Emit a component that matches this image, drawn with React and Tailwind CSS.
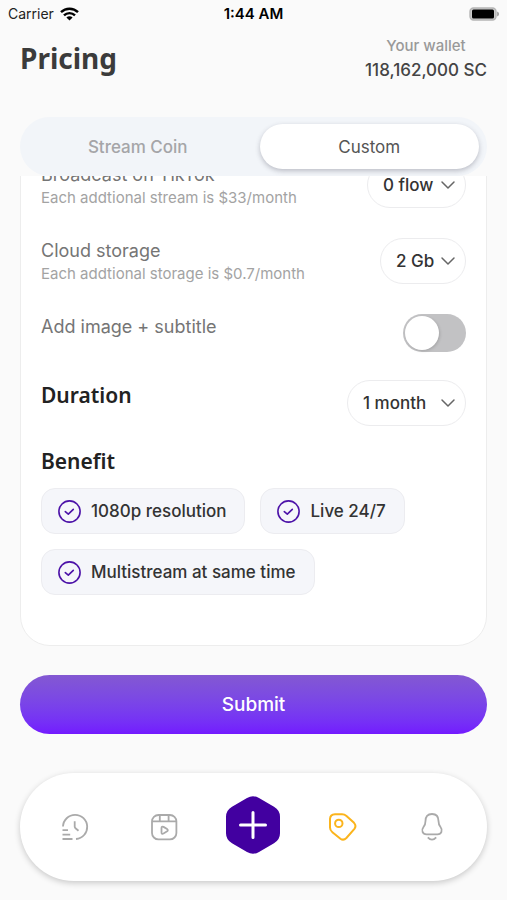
import React, { useState } from "react";
import { ChevronDown } from "lucide-react";

const tabs = ["Stream Coin", "Custom"];

const benefits = ["1080p resolution", "Live 24/7", "Multistream at same time"];

const StatusBar = () => (
  <div className="relative flex h-7 items-center justify-between px-2 text-sm text-[#222]">
    <div className="flex items-center gap-1.5 font-[Inter,sans-serif]">
      <span>Carrier</span>
      <svg width="19" height="14" viewBox="0 0 19 14" fill="none" stroke="#000" strokeWidth="2.4">
        <path d="M1 5.2a12.2 12.2 0 0 1 17 0" />
        <path d="M4 8.4a7.8 7.8 0 0 1 11 0" />
        <path d="M9.5 13.6 6.4 10.5a4.4 4.4 0 0 1 6.2 0Z" fill="#000" stroke="none" />
      </svg>
    </div>
    <span className="absolute inset-x-0 text-center font-[Inter,sans-serif] text-[15px] font-semibold text-black">
      1:44 AM
    </span>
    <svg width="31" height="15" viewBox="0 0 31 15">
      <rect x="2" y="1" width="26" height="12" rx="3.5" fill="#ccc" stroke="#b5b5b5" strokeWidth="1.4" />
      <rect x="4" y="2.5" width="22" height="9" rx="1.5" fill="#000" />
      <path d="M29.2 4.5v5q1.8-.8 1.8-2.5t-1.8-2.5Z" fill="#999" />
    </svg>
  </div>
);

const PillSelect = ({ id, label, options, className }) => (
  <div className={`relative shrink-0 ${className}`}>
    <select
      id={id}
      aria-label={label}
      className="h-[46px] w-full appearance-none rounded-full border border-[#ececee] bg-white pl-[15px] pr-7 pt-0.5 text-[17px] font-medium text-[#333]"
    >
      {options.map((option) => (
        <option key={option}>{option}</option>
      ))}
    </select>
    <ChevronDown
      size={24}
      strokeWidth={1.5}
      className="pointer-events-none absolute right-[6px] top-[11px] text-[#666]"
    />
  </div>
);

const OptionRow = ({ title, note, children }) => (
  <div className="flex items-start justify-between">
    <div>
      <p className="text-lg leading-[26px] text-[#757575]">{title}</p>
      <p className="text-[15px] leading-5 text-[#a3a3a3]">{note}</p>
    </div>
    {children}
  </div>
);

const Benefit = ({ text }) => (
  <li className="flex h-[46px] items-center gap-2.5 rounded-[14px] border border-[#ececf0] bg-[#f5f6fa] pl-4 pr-[18px] text-[17px] font-medium text-[#333]">
    <svg width="23" height="23" viewBox="0 0 23 23" fill="none" stroke="#4c12a8" strokeWidth="1.6">
      <circle cx="11.5" cy="11.5" r="10.6" />
      <path d="m7.3 11.6 3 2.6 5-4.8" strokeLinecap="round" strokeLinejoin="round" />
    </svg>
    <span className="pt-0.5">{text}</span>
  </li>
);

const NavBar = () => (
  <nav className="grid h-[108px] grid-cols-5 items-center justify-items-center rounded-[54px] bg-white px-[10px] text-[#aaa] shadow-[0_2px_6px_rgba(0,0,0,0.2)]">
    <button aria-label="History">
      <svg width="28" height="28" viewBox="-1 -1 28 28" fill="none" stroke="currentColor" strokeWidth="1.8">
        <path d="M1 12.5A12.1 12.1 0 1 1 14 25" />
        <path d="M.5 16.2H6M.5 20.6h7.7M.5 25h10" />
        <path d="M12.7 7.3v5.2q0 1 .8 1.7l3 2.6" />
      </svg>
    </button>
    <button aria-label="Videos">
      <svg width="28" height="28" viewBox="-1 -1 28 28" fill="none" stroke="currentColor" strokeWidth="1.8">
        <rect x="1" y="1" width="24.4" height="24.4" rx="6.5" />
        <path d="M1 7.3h24.4M8.8 1v6.3M17.6 1v6.3" />
        <path d="M10.5 14.2v4q0 2.3 2 1.3l3.6-2.2q1.4-1.1 0-2.2l-3.6-2.2q-2-1-2 1.3Z" />
      </svg>
    </button>
    <button aria-label="Create">
      <svg width="54" height="58" viewBox="0 0 54 58" className="-mt-1">
        <path
          d="M21 2q6-3.5 12 0l15 8.7q6 3.5 6 10v16.6q0 6.5-6 10L33 56q-6 3.5-12 0L6 47.3q-6-3.5-6-10V20.7q0-6.5 6-10Z"
          fill="#4200a0"
        />
        <path d="M27 16.500v25M14.500 29h25" stroke="#fff" strokeWidth="3" strokeLinecap="round" />
      </svg>
    </button>
    <button aria-label="Pricing" className="text-[#fbb41c]">
      <svg width="30" height="30" viewBox="-1 -1 30 30" fill="none" stroke="currentColor" strokeWidth="2">
        <path d="M6 1.2H13q2.500 0 4.500 1.700l7.500 6.900q2.700 3 .4 6l-8 9.200q-2.900 2.900-6 .7l-8-6.500Q.8 17 1 14V6q.2-4.500 5-4.800Z" />
        <circle cx="9.8" cy="10.4" r="3.7" />
      </svg>
    </button>
    <button aria-label="Notifications">
      <svg width="24" height="28" viewBox="-1 0 24 28" fill="none" stroke="currentColor" strokeWidth="1.8">
        <path d="M4.500 8C4.500 3.500 6.500 1 11 1s6.500 2.500 6.500 7c0 3.200.4 4 2 6 2.500 3.200 1 7.300-3 7.300h-11c-4 0-5.500-4.100-3-7.300 1.600-2 2-2.800 2-6Z" />
        <path d="M6.800 24.300q4.200 4.600 8.400 0" />
      </svg>
    </button>
  </nav>
);

const App = () => {
  const [activeTab, setActiveTab] = useState("Custom");

  return (
    <div className="flex h-screen flex-col bg-[#fafafa] font-[Inter,sans-serif] text-base">
      <StatusBar />

      <div className="flex min-h-0 flex-1 flex-col px-5 pb-[19px]">
        <header className="flex h-[89px] items-start justify-between pt-2">
          <h1 className="pt-0.5 font-['Noto_Sans',sans-serif] text-[28px] font-bold leading-10 text-[#3b3b3b]">
            Pricing
          </h1>
          <div className="text-center">
            <p className="text-[15px] font-medium leading-5 text-[#999]">Your wallet</p>
            <p className="pt-0.5 text-[17px] font-medium leading-6 text-[#444]">118,162,000 SC</p>
          </div>
        </header>

        <div
          role="tablist"
          className="grid shrink-0 grid-cols-2 rounded-full bg-[#f2f5f9] px-0.5 py-[7px] text-[17px]"
        >
          {tabs.map((tab) => (
            <button
              key={tab}
              role="tab"
              aria-selected={activeTab === tab}
              onClick={() => setActiveTab(tab)}
              className={`mx-1.5 h-[45px] rounded-full pt-0.5 ${
                activeTab === tab
                  ? "bg-white text-[#555] shadow-[0_2px_5px_rgba(60,60,80,0.3)]"
                  : "font-medium text-[#a5a5a8]"
              }`}
            >
              {tab}
            </button>
          ))}
        </div>

        {/* reversed column keeps the list scrolled to its end on load */}
        <div className="flex min-h-0 flex-1 flex-col-reverse overflow-y-auto [scrollbar-width:none]">
          <div className="rounded-[30px] border border-[#ededed] bg-white px-5 pb-[50px] pt-8">
            <div className="flex flex-col gap-[30px]">
              <OptionRow title="Broadcast on TikTok" note="Each addtional stream is $33/month">
                <PillSelect id="tiktok" label="Broadcast on TikTok" options={["0 flow", "1 flow"]} className="w-[99px]" />
              </OptionRow>
              <OptionRow title="Cloud storage" note="Each addtional storage is $0.7/month">
                <PillSelect id="storage" label="Cloud storage" options={["2 Gb", "4 Gb"]} className="w-[86px]" />
              </OptionRow>
              <div className="flex items-start justify-between">
                <label htmlFor="subtitle" className="text-lg leading-[26px] text-[#757575]">
                  Add image + subtitle
                </label>
                <input
                  id="subtitle"
                  type="checkbox"
                  role="switch"
                  className="h-[38px] w-[63px] appearance-none rounded-full bg-[#c2c2c4] p-0.5 before:block before:size-[34px] before:rounded-full before:bg-white before:shadow-[1px_1px_3px_rgba(0,0,0,0.15)] checked:bg-[#4200a0] checked:before:ml-[25px]"
                />
              </div>
            </div>

            <div className="mt-7 flex items-start justify-between">
              <label
                htmlFor="duration"
                className="font-['Noto_Sans',sans-serif] text-[21px] font-semibold leading-[30px] text-[#222]"
              >
                Duration
              </label>
              <PillSelect id="duration" label="Duration" options={["1 month", "2 month"]} className="w-[119px]" />
            </div>

            <h2 className="mt-5 font-['Noto_Sans',sans-serif] text-[21px] font-semibold leading-[30px] text-[#222]">
              Benefit
            </h2>
            <ul className="mt-3 flex flex-wrap gap-[15px]">
              {benefits.map((benefit) => (
                <Benefit key={benefit} text={benefit} />
              ))}
            </ul>
          </div>
        </div>

        <button className="mb-[39px] mt-[29px] h-[59px] shrink-0 rounded-full bg-linear-to-b from-[#8358d2] to-[#7319ff] pt-0.5 text-[19px] font-medium text-white">
          Submit
        </button>

        <NavBar />
      </div>
    </div>
  );
};

export default App;
